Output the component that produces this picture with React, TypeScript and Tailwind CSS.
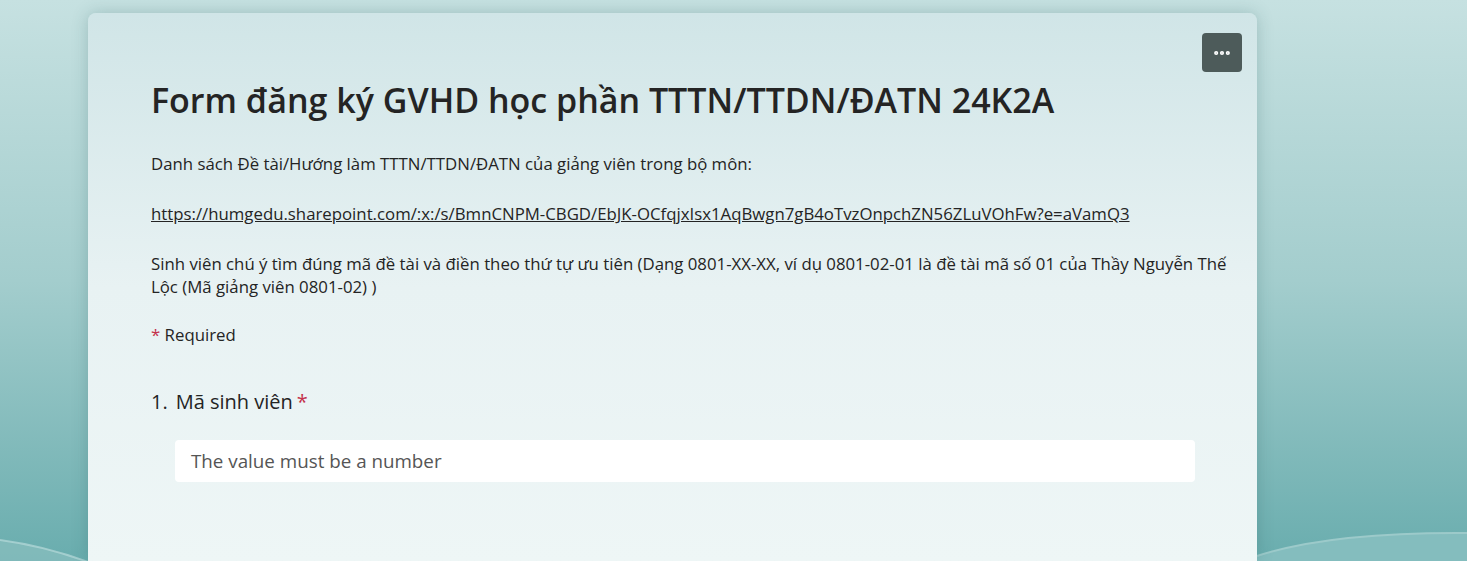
import { MoreHorizontal } from "lucide-react";

const App = () => {
    return (
        <div className="relative h-[561px] w-full overflow-hidden bg-gradient-to-b from-[#c6e1e1] via-[#a3cdcd] to-[#69adae] font-['Open_Sans',sans-serif]">
            {/* background waves */}
            <svg className="absolute inset-0 h-full w-full" viewBox="0 0 1467 561" preserveAspectRatio="none">
                <path d="M0 540 Q 60 548 120 575 L 0 575 Z" fill="#8fc1c2" opacity="0.6" />
                <path d="M0 540 Q 60 548 120 575" stroke="#b7dada" strokeWidth="2" fill="none" opacity="0.7" />
                <path d="M1257 556 Q 1330 532 1467 533 L 1467 561 L 1257 561 Z" fill="#84bdbe" />
                <path d="M1257 556 Q 1330 532 1467 533" stroke="#9ccaca" strokeWidth="2" fill="none" />
            </svg>

            <div className="relative mx-auto mt-[13px] h-[548px] w-[1169px] -translate-x-[61px] rounded-t-lg bg-gradient-to-b from-[#d0e5e7] via-[#e8f2f3] to-[#eef6f6] shadow-[0_0_16px_rgba(40,90,90,0.25)]">
                <div className="flex justify-end px-[15px] pt-5">
                    <button className="flex h-[39px] w-10 items-center justify-center rounded bg-[#4d5b5a] text-white">
                        <MoreHorizontal size={20} strokeWidth={3} />
                    </button>
                </div>

                <div className="pl-[63px] pr-5">
                    <h1 className="mt-[4px] text-[34px] font-semibold leading-[48px] text-[#242424]">
                        Form đăng ký GVHD học phần TTTN/TTDN/ĐATN 24K2A
                    </h1>

                    <div className="mt-[28px] text-[16.8px] leading-[23px] text-[#242424]">
                        <p>Danh sách Đề tài/Hướng làm TTTN/TTDN/ĐATN của giảng viên trong bộ môn:</p>
                        <p className="mt-[27px]">
                            <a className="underline" href="#">
                                https://humgedu.sharepoint.com/:x:/s/BmnCNPM-CBGD/EbJK-OCfqjxIsx1AqBwgn7gB4oTvzOnpchZN56ZLuVOhFw?e=aVamQ3
                            </a>
                        </p>
                        <p className="mt-[27px]">
                            Sinh viên chú ý tìm đúng mã đề tài và điền theo thứ tự ưu tiên (Dạng 0801-XX-XX, ví dụ 0801-02-01 là đề tài mã số 01 của Thầy Nguyễn Thế Lộc (Mã giảng viên 0801-02) )
                        </p>
                        <p className="mt-[25px]">
                            <span className="text-[#c4314b]">*</span> Required
                        </p>
                    </div>

                    <div className="mt-[42px] flex text-[20px] leading-[28px] text-[#242424]">
                        <span className="mr-2">1.</span>
                        <span>Mã sinh viên</span>
                        <span className="ml-1 text-[#c4314b]">*</span>
                    </div>

                    <div className="mt-[24px] ml-6 mr-[42px] flex h-[42px] items-center rounded bg-white px-4 text-[18.8px] text-[#555]">
                        The value must be a number
                    </div>
                </div>
            </div>
        </div>
    );
};

export default App;
